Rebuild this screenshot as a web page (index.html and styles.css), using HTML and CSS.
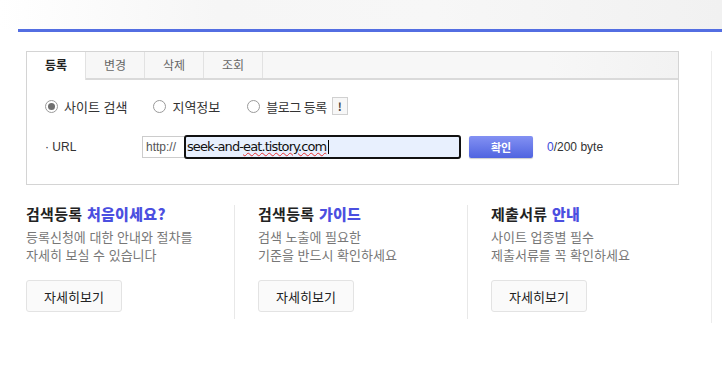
FILE: index.html
```html
<!DOCTYPE html>
<html lang="ko">
<head>
    <meta charset="UTF-8" />
    <title>사이트 등록</title>
    <link rel="stylesheet" href="styles.css">
</head>
<body>
    <div class="top-strip"></div>
    <div class="top-line"></div>
    <div class="content">
        <div class="panel">
            <ul class="tabs">
                <li class="tab active">등록</li>
                <li class="tab">변경</li>
                <li class="tab">삭제</li>
                <li class="tab">조회</li>
            </ul>
            <div class="panel-body">
                <div class="radio-row">
                    <label class="radio checked"><span class="dot"></span>사이트 검색</label>
                    <label class="radio"><span class="dot"></span>지역정보</label>
                    <label class="radio"><span class="dot"></span>블로그 등록</label>
                    <span class="help">!</span>
                </div>
                <div class="url-row">
                    <span class="url-label">· URL</span>
                    <span class="prefix">http://</span>
                    <div class="url-input">seek-and-<span class="typo">eat.tistory.com</span><span class="caret"></span></div>
                    <button class="ok-btn">확인</button>
                    <span class="bytes"><em>0</em>/200 byte</span>
                </div>
            </div>
        </div>

        <div class="guides">
            <div class="guide">
                <h3><span>검색등록</span> <b>처음이세요?</b></h3>
                <p>등록신청에 대한 안내와 절차를<br>자세히 보실 수 있습니다</p>
                <button class="more-btn">자세히보기</button>
            </div>
            <div class="guide">
                <h3><span>검색등록</span> <b>가이드</b></h3>
                <p>검색 노출에 필요한<br>기준을 반드시 확인하세요</p>
                <button class="more-btn">자세히보기</button>
            </div>
            <div class="guide">
                <h3><span>제출서류</span> <b>안내</b></h3>
                <p>사이트 업종별 필수<br>제출서류를 꼭 확인하세요</p>
                <button class="more-btn">자세히보기</button>
            </div>
        </div>
    </div>
</body>
</html>
```

FILE: styles.css
```css
body {
    margin: 0;
    font-family: "Noto Sans CJK KR", "Liberation Sans", sans-serif;
    background: #fff;
    color: #333;
}

.top-strip {
    height: 29px;
    background: linear-gradient(to right, #fff 0, #f6f6f6 30%, #f7f7f7 60%, #f1f1f1 100%);
}

.top-line {
    height: 3px;
    margin-left: 18px;
    background: #536ee2;
}

.content {
    width: 712px;
    margin-top: 19px;
    padding-left: 26px;
    box-sizing: border-box;
    border-right: 1px solid #ececec;
    height: 272px;
}

.panel {
    width: 653px;
    height: 134px;
    box-sizing: border-box;
    border: 1px solid #d4d4d4;
}

.tabs {
    display: flex;
    margin: 0;
    padding: 0;
    list-style: none;
    height: 28px;
    box-sizing: border-box;
    background: linear-gradient(to right, #f7f7f7, #f7f7f7 80%, #f2f2f2);
    border-bottom: 2px solid #dadada;
}

.tab {
    width: 58px;
    height: 26px;
    line-height: 26px;
    text-align: center;
    font-size: 12px;
    color: #666;
    border-right: 1px solid #e2e2e2;
}

.tab.active {
    height: 28px;
    background: #fff;
    color: #222;
    font-weight: bold;
}

.panel-body {
    padding: 16px 0 0 18px;
}

.radio-row {
    display: flex;
    align-items: center;
    height: 20px;
    font-size: 13px;
    color: #333;
}

.radio {
    display: flex;
    align-items: center;
    margin-right: 26px;
}

.radio:nth-child(2) {
    margin-right: 27px;
}

.radio:nth-child(3) {
    margin-right: 5px;
    letter-spacing: -0.5px;
}

.dot {
    width: 11px;
    height: 11px;
    border: 1px solid #9a9a9a;
    border-radius: 50%;
    margin-right: 6px;
    box-sizing: content-box;
    background: #fff;
    position: relative;
}

.radio.checked .dot::after {
    content: "";
    position: absolute;
    left: 2px;
    top: 2px;
    width: 7px;
    height: 7px;
    border-radius: 50%;
    background: #6f6f6f;
}

.help {
    width: 14px;
    height: 16px;
    line-height: 16px;
    text-align: center;
    border: 1px solid #d0d0d0;
    background: #f7f7f7;
    font-size: 11px;
    font-weight: bold;
    color: #444;
}

.url-row {
    display: flex;
    align-items: center;
    margin-top: 19px;
    height: 24px;
    font-size: 12px;
}

.url-label {
    width: 97px;
    color: #333;
    font-family: "Liberation Sans", sans-serif;
}

.prefix {
    width: 42px;
    box-sizing: border-box;
    height: 22px;
    line-height: 20px;
    padding-left: 3px;
    border: 1px solid #ccc;
    border-right: none;
    color: #555;
    font-family: "Liberation Sans", sans-serif;
}

.url-input {
    width: 277px;
    height: 24px;
    box-sizing: border-box;
    border: 2px solid #111;
    border-radius: 3px;
    background: #e8f0fe;
    line-height: 20px;
    padding-left: 1px;
    font-size: 13px;
    color: #111;
    font-family: "DejaVu Sans", sans-serif;
    letter-spacing: -0.9px;
    display: flex;
    align-items: center;
}

.typo {
    text-decoration: underline wavy #e53030;
    text-decoration-thickness: 1px;
}

.caret {
    width: 1px;
    height: 14px;
    background: #000;
    margin-left: 2px;
}

.ok-btn {
    margin-left: 8px;
    width: 64px;
    height: 22px;
    border: none;
    border-radius: 2px;
    background: linear-gradient(#8391f3, #5064e0);
    box-shadow: 0 1px 1px rgba(0, 0, 0, 0.2);
    color: #fff;
    font-size: 11px;
    font-weight: bold;
    font-family: inherit;
    padding: 0;
}

.bytes {
    margin-left: 14px;
    color: #333;
    font-family: "Liberation Sans", sans-serif;
}

.bytes em {
    font-style: normal;
    color: #3b4ad8;
}

.guides {
    display: flex;
    margin-top: 20px;
}

.guide {
    width: 208px;
    padding-bottom: 7px;
    flex-shrink: 0;
}

.guide + .guide {
    width: 209px;
    padding-left: 23px;
    border-left: 1px solid #e8e8e8;
}

.guide h3 {
    margin: 0;
    font-size: 15px;
    line-height: 18px;
    font-weight: bold;
    color: #222;
    letter-spacing: 0.3px;
}

.guide h3 b {
    color: #4b4fe0;
}

.guide p {
    margin: 5px 0 0;
    font-size: 13px;
    line-height: 18px;
    color: #777;
}

.more-btn {
    margin-top: 16px;
    width: 96px;
    height: 32px;
    border: 1px solid #e3e3e3;
    border-radius: 3px;
    background: #fafafa;
    font-size: 13px;
    color: #222;
    font-family: inherit;
    padding: 0;
}
```
